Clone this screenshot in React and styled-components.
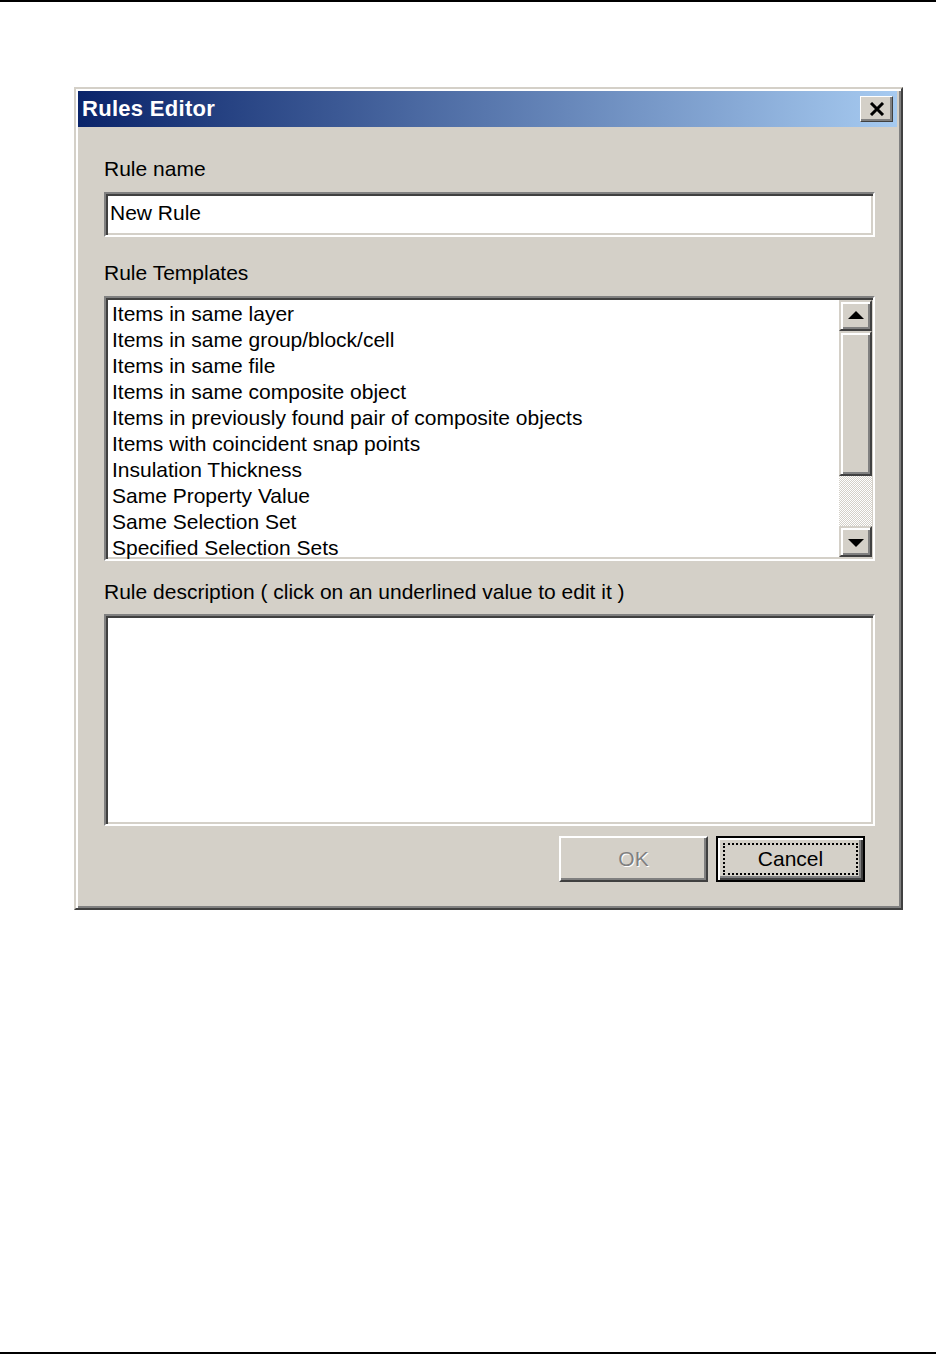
import styled, { createGlobalStyle } from 'styled-components';

const GlobalStyle = createGlobalStyle`
  html, body {
    margin: 0;
    padding: 0;
    background: #fff;
  }
  * {
    box-sizing: border-box;
  }
`

const Page = styled.div`
  height: 1354px;
  border-top: 2px solid #000;
  border-bottom: 2px solid #000;
  padding: 85px 0 0 74px;
  font-family: "Liberation Sans", Arial, sans-serif;
`
const Window = styled.div`
  width: 829px;
  height: 823px;
  background: #d4d0c8;
  border: 2px solid;
  border-color: #d4d0c8 #404040 #404040 #d4d0c8;
  box-shadow: inset 2px 2px #fff, inset -2px -2px #808080;
  padding: 2px 4px 4px 2px;
  display: flex;
  flex-direction: column;
`
const TitleBar = styled.div`
  height: 36px;
  display: flex;
  align-items: center;
  justify-content: space-between;
  padding: 0 4px 0 4px;
  background: linear-gradient(to right, #0a246a, #a6caf0);
`
const Title = styled.span`
  color: #fff;
  font-weight: bold;
  font-size: 22px;
  letter-spacing: 0.3px;
`
const CloseButton = styled.button`
  width: 33px;
  height: 26px;
  padding: 0;
  display: flex;
  align-items: center;
  justify-content: center;
  background: #d4d0c8;
  border: 1px solid;
  border-color: #fff #404040 #404040 #fff;
  box-shadow: inset -2px -2px #808080, inset 1px 1px #d4d0c8;
`
const Body = styled.div`
  flex: 1;
  display: flex;
  flex-direction: column;
  padding: 30px 22px 0 26px;
`
const Label = styled.div`
  font-size: 21px;
  line-height: 24px;
  color: #000;
  white-space: nowrap;
  margin-top: ${p => p.$top || 0}px;
  margin-bottom: ${p => p.$bottom || 10}px;
`
const Sunken = styled.div`
  background: #fff;
  border: 2px solid;
  border-color: #808080 #fff #fff #808080;
  box-shadow: inset 2px 2px #404040, inset -2px -2px #d4d0c8;
  height: ${p => p.$h}px;
`
const TextInput = styled(Sunken)`
  display: flex;
  align-items: center;
  padding: 0 4px 4px 4px;
  font-size: 21px;
  color: #000;
`
const ListBox = styled(Sunken)`
  display: flex;
  padding: 0 1px 0 2px;
`
const Items = styled.div`
  flex: 1;
  padding: 3px 0 0 4px;
`
const Item = styled.div`
  font-size: 21px;
  line-height: 26px;
  height: 26px;
  color: #000;
  white-space: nowrap;
`
const ScrollBar = styled.div`
  width: 33px;
  display: flex;
  flex-direction: column;
  padding: 2px 0 2px 0;
`
const ScrollButton = styled.div`
  height: 31px;
  display: flex;
  align-items: center;
  justify-content: center;
  background: #d4d0c8;
  border: 2px solid;
  border-color: #d4d0c8 #404040 #404040 #d4d0c8;
  box-shadow: inset 2px 2px #fff, inset -2px -2px #808080;
`
const Arrow = styled.span`
  width: 0;
  height: 0;
  border-left: 8px solid transparent;
  border-right: 8px solid transparent;
  ${p => p.$up
    ? 'border-bottom: 8px solid #000; margin-top: -2px;'
    : 'border-top: 8px solid #000; margin-top: 2px;'}
`
const Thumb = styled(ScrollButton)`
  height: 145px;
`
const Track = styled.div`
  flex: 1;
  background: repeating-conic-gradient(#fff 0 25%, #d4d0c8 0 50%) 0 0 / 2px 2px;
`
const ButtonRow = styled.div`
  display: flex;
  justify-content: flex-end;
  gap: 8px;
  margin-top: 10px;
  padding-right: 10px;
`
const DialogButton = styled.button`
  width: 149px;
  height: 46px;
  font-family: "Liberation Sans", Arial, sans-serif;
  font-size: 21px;
  background: #d4d0c8;
  color: ${p => (p.disabled ? '#808080' : '#000')};
  text-shadow: ${p => (p.disabled ? '1px 1px #fff' : 'none')};
  border: 2px solid;
  border-color: ${p => (p.$default ? '#000' : '#fff #404040 #404040 #fff')};
  box-shadow: ${p => (p.$default
    ? 'inset 2px 2px #fff, inset -2px -2px #404040, inset -4px -4px #808080'
    : 'inset -2px -2px #808080')};
  padding: 5px;
  display: flex;
`
const Focus = styled.span`
  flex: 1;
  display: flex;
  align-items: center;
  justify-content: center;
  border: ${p => (p.$on ? '2px dotted #000' : '2px solid transparent')};
`

const templates = [
  'Items in same layer',
  'Items in same group/block/cell',
  'Items in same file',
  'Items in same composite object',
  'Items in previously found pair of composite objects',
  'Items with coincident snap points',
  'Insulation Thickness',
  'Same Property Value',
  'Same Selection Set',
  'Specified Selection Sets',
];

export default function App() {
  return (
    <>
      <GlobalStyle />
      <Page>
        <Window>
          <TitleBar>
            <Title>Rules Editor</Title>
            <CloseButton>
              <svg width="16" height="14" viewBox="0 0 16 14">
                <path d="M2 1 L14 13 M14 1 L2 13" stroke="#000" strokeWidth="3" />
              </svg>
            </CloseButton>
          </TitleBar>
          <Body>
            <Label $bottom={11}>Rule name</Label>
            <TextInput $h={45}>New Rule</TextInput>
            <Label $top={24} $bottom={11}>Rule Templates</Label>
            <ListBox $h={265}>
              <Items>
                {templates.map(t => <Item key={t}>{t}</Item>)}
              </Items>
              <ScrollBar>
                <ScrollButton><Arrow $up /></ScrollButton>
                <Thumb />
                <Track />
                <ScrollButton><Arrow /></ScrollButton>
              </ScrollBar>
            </ListBox>
            <Label $top={19} $bottom={10}>Rule description ( click on an underlined value to edit it )</Label>
            <Sunken $h={212} />
            <ButtonRow>
              <DialogButton disabled><Focus>OK</Focus></DialogButton>
              <DialogButton $default><Focus $on>Cancel</Focus></DialogButton>
            </ButtonRow>
          </Body>
        </Window>
      </Page>
    </>
  );
}
